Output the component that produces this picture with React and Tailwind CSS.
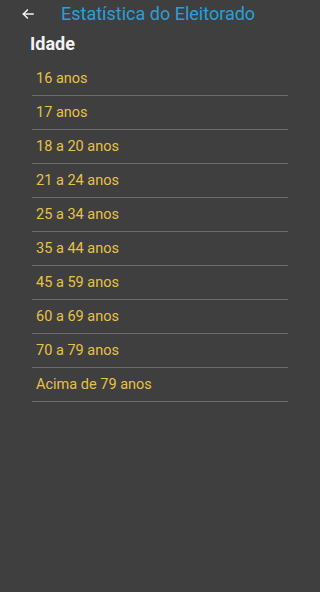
import React from 'react';

const faixas = [
  '16 anos',
  '17 anos',
  '18 a 20 anos',
  '21 a 24 anos',
  '25 a 34 anos',
  '35 a 44 anos',
  '45 a 59 anos',
  '60 a 69 anos',
  '70 a 79 anos',
  'Acima de 79 anos',
];

export default function App() {
  return (
    <div className="w-full min-h-screen bg-[#3f3f3f] overflow-hidden" style={{ fontFamily: 'Roboto, "Noto Sans", sans-serif' }}>
      <div className="flex items-center h-[27px] pt-[1px]">
        <svg className="ml-[21px] w-[14px] h-[14px]" viewBox="0 0 24 24" fill="none" stroke="#f2f2f2" strokeWidth="2.6" strokeLinecap="round" strokeLinejoin="round">
          <path d="M21 12H4" />
          <path d="M11 5l-7 7 7 7" />
        </svg>
        <span className="ml-[26px] text-[18px] text-[#2a9fd8] leading-none">Estatística do Eleitorado</span>
      </div>
      <div className="pl-[30px] pt-[5px] h-[35px] text-[18px] font-bold text-[#f2f2f2] leading-[24px]">Idade</div>
      <ul className="ml-[32px] mr-[3px] w-[256px]">
        {faixas.map((f) => (
          <li key={f} className="h-[34px] flex items-center pl-[4px] pt-[1px] border-b border-[#6b6b6b] text-[14.5px] text-[#e6c246]">
            {f}
          </li>
        ))}
      </ul>
    </div>
  );
}
